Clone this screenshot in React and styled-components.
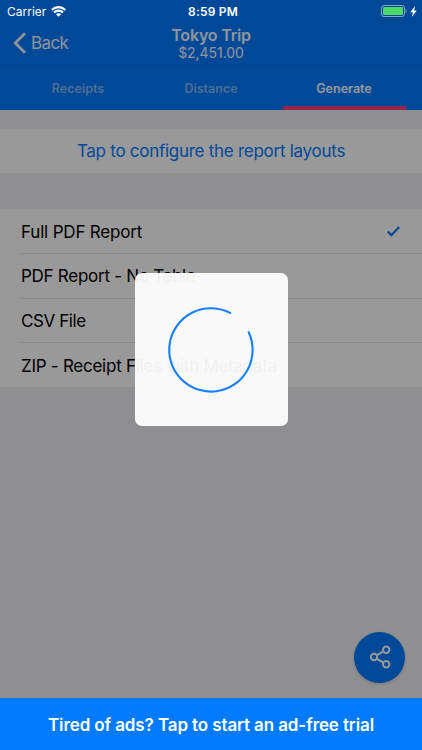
import React from "react";
import styled, { createGlobalStyle } from "styled-components";

const Global = createGlobalStyle`
  * { box-sizing: border-box; }
  body { margin: 0; overflow: hidden; font-family: Inter, "Liberation Sans", sans-serif; }
`;
const Screen = styled.div`
  position: relative;
  display: flex;
  flex-direction: column;
  width: 422px;
  height: 750px;
  background: #efeff4;
`;
const NavBar = styled.header`
  display: grid;
  grid-template-columns: 1fr auto 1fr;
  height: 66px;
  padding: 22px 13px 0;
  background: #007aff;
  border-bottom: 1px solid #0071ec;
  color: #fff;
`;
const BackButton = styled.button`
  display: flex;
  align-items: center;
  gap: 5px;
  height: 42px;
  padding: 0;
  border: 0;
  background: none;
  color: inherit;
  opacity: 0.94;
  font: 400 17px Inter, sans-serif;
  letter-spacing: -0.6px;
`;
const Heading = styled.div`
  display: flex;
  flex-direction: column;
  align-items: center;
  padding-top: 3px;
  opacity: 0.94;
`;
const Title = styled.div`
  font-size: 16px;
  font-weight: 600;
  line-height: 20px;
  letter-spacing: -0.2px;
`;
const Subtitle = styled.div`
  font-size: 14px;
  line-height: 15px;
  letter-spacing: -0.05px;
`;
const Tabs = styled.nav`
  display: grid;
  grid-template-columns: repeat(3, 123px);
  justify-content: center;
  gap: 10px;
  height: 44px;
  background: #007aff;
`;
const Tab = styled.div`
  display: flex;
  justify-content: center;
  align-items: center;
  padding-top: 4px;
  border-bottom: 4px solid ${(p) => (p.$active ? "#f2447f" : "transparent")};
  color: ${(p) => (p.$active ? "#fff" : "#80b8f5")};
  font-size: 12.5px;
  font-weight: 600;
  letter-spacing: 0;
`;
const Section = styled.section`
  margin-top: ${(p) => p.$gap}px;
  background: #fff;
`;
const LinkRow = styled.div`
  display: flex;
  align-items: center;
  justify-content: center;
  height: 43.5px;
  color: #007aff;
  font-size: 17px;
  letter-spacing: -0.27px;
`;
const Row = styled.div`
  display: flex;
  align-items: center;
  justify-content: space-between;
  height: ${(p) => p.$height}px;
  margin-left: 20px;
  padding: 1px 22px 0 1px;
  color: #000;
  font-size: 17px;
  letter-spacing: ${(p) => p.$spacing}px;
  &:not(:last-child) { border-bottom: 1px solid #e6e6ea; }
`;
const ShareButton = styled.button`
  position: absolute;
  right: 17px;
  bottom: 67.5px;
  display: grid;
  place-items: center;
  width: 51px;
  height: 51px;
  padding: 0;
  border: 0;
  border-radius: 50%;
  background: #007aff;
  box-shadow: 0 1px 3px rgba(0, 0, 0, 0.2);
`;
const Dim = styled.div`
  position: absolute;
  inset: 0;
  background: rgba(0, 0, 0, 0.4);
`;
const StatusBar = styled.div`
  position: absolute;
  inset: 0 0 auto;
  display: grid;
  grid-template-columns: 1fr auto 1fr;
  align-items: center;
  height: 22px;
  padding: 0 5px 0 7px;
  color: #fff;
  font-size: 12px;
`;
const StatusGroup = styled.div`
  display: flex;
  align-items: center;
  justify-content: ${(p) => (p.$end ? "flex-end" : "flex-start")};
  gap: ${(p) => (p.$end ? 3 : 5)}px;
`;
const Clock = styled.div`
  padding-left: 2px;
  font-weight: 600;
  letter-spacing: 0.2px;
`;
const LoadingCard = styled.div`
  position: absolute;
  left: 134.5px;
  top: 273px;
  display: grid;
  place-items: center;
  width: 153px;
  height: 153px;
  border-radius: 7px;
  background: rgba(255, 255, 255, 0.94);
`;
const AdBanner = styled.footer`
  position: absolute;
  inset: auto 0 0;
  display: flex;
  align-items: center;
  justify-content: center;
  height: 52px;
  padding-top: 1px;
  background: #007aff;
  color: #fff;
  font-size: 17px;
  font-weight: 600;
  letter-spacing: -0.11px;
`;

const reports = [
  { name: "Full PDF Report", selected: true, spacing: -0.18, height: 45 },
  { name: "PDF Report - No Table", spacing: -0.27, height: 44.5 },
  { name: "CSV File", spacing: -0.42, height: 44.5 },
  { name: "ZIP - Receipt Files with Metadata", spacing: -0.26, height: 44 },
];

const BackIcon = () => (
  <svg width="13" height="22" viewBox="0 0 13 22" fill="none" stroke="currentColor" strokeWidth="2.8">
    <path d="M12 1.2 2.2 11 12 20.8" />
  </svg>
);
const WifiIcon = () => (
  <svg width="15" height="11" viewBox="0 0 15 11" fill="none" stroke="#fff" strokeWidth="2.1">
    <path d="M.7 4C4.6.2 10.4.2 14.3 4M3 6.4c2.5-2.4 6.5-2.4 9 0" />
    <path d="M5 8.3c1.4-1.3 3.6-1.3 5 0L7.5 10.8Z" fill="#fff" stroke="none" />
  </svg>
);
const BatteryIcon = () => (
  <svg width="26" height="12" viewBox="0 0 26 12">
    <rect x=".5" y=".5" width="23" height="11" rx="2.5" fill="none" stroke="#80a5cc" />
    <rect x="2" y="2" width="20" height="8" rx="1" fill="#4cd964" />
    <path d="M24.7 4c1.3.7 1.3 3.3 0 4Z" fill="#80a5cc" />
  </svg>
);
const BoltIcon = () => (
  <svg width="7" height="11" viewBox="0 0 6 10" fill="#fff">
    <path d="M4.5 0 0 5.6h2.5L1.5 10 6 4.2H3.5Z" />
  </svg>
);
const CheckIcon = () => (
  <svg width="13" height="11" viewBox="0 0 13 11" fill="none" stroke="#007aff" strokeWidth="2.3">
    <path d="m.8 5.5 3.5 3.7L12.2 1" />
  </svg>
);
const ShareIcon = () => (
  <svg width="22" height="24" viewBox="0 0 22 24" fill="none" stroke="#fff" strokeWidth="2">
    <path d="m7.9 10.1 6-3.4M7.9 13.9l6 3.4" />
    <circle cx="5" cy="12" r="3.2" />
    <circle cx="17.2" cy="4.8" r="3.2" />
    <circle cx="17.2" cy="19.2" r="3.2" />
  </svg>
);
const Spinner = () => (
  <svg width="88" height="88" viewBox="0 0 88 88" fill="none" stroke="#167ffb" strokeWidth="2.1" strokeLinecap="round">
    <path d="M63.2 6.9A41.7 41.7 0 1 0 81.7 26.2" />
  </svg>
);

export default function App() {
  return (
    <Screen>
      <Global />
      <NavBar>
        <BackButton><BackIcon />Back</BackButton>
        <Heading>
          <Title>Tokyo Trip</Title>
          <Subtitle>$2,451.00</Subtitle>
        </Heading>
      </NavBar>
      <Tabs>
        <Tab>Receipts</Tab>
        <Tab>Distance</Tab>
        <Tab $active>Generate</Tab>
      </Tabs>
      <Section $gap={19}>
        <LinkRow>Tap to configure the report layouts</LinkRow>
      </Section>
      <Section $gap={36.5}>
        {reports.map((r) => (
          <Row key={r.name} $spacing={r.spacing} $height={r.height}>
            {r.name}
            {r.selected && <CheckIcon />}
          </Row>
        ))}
      </Section>
      <ShareButton aria-label="Share"><ShareIcon /></ShareButton>
      <Dim />
      <StatusBar>
        <StatusGroup>Carrier<WifiIcon /></StatusGroup>
        <Clock>8:59 PM</Clock>
        <StatusGroup $end><BatteryIcon /><BoltIcon /></StatusGroup>
      </StatusBar>
      <LoadingCard><Spinner /></LoadingCard>
      <AdBanner>Tired of ads? Tap to start an ad-free trial</AdBanner>
    </Screen>
  );
}
